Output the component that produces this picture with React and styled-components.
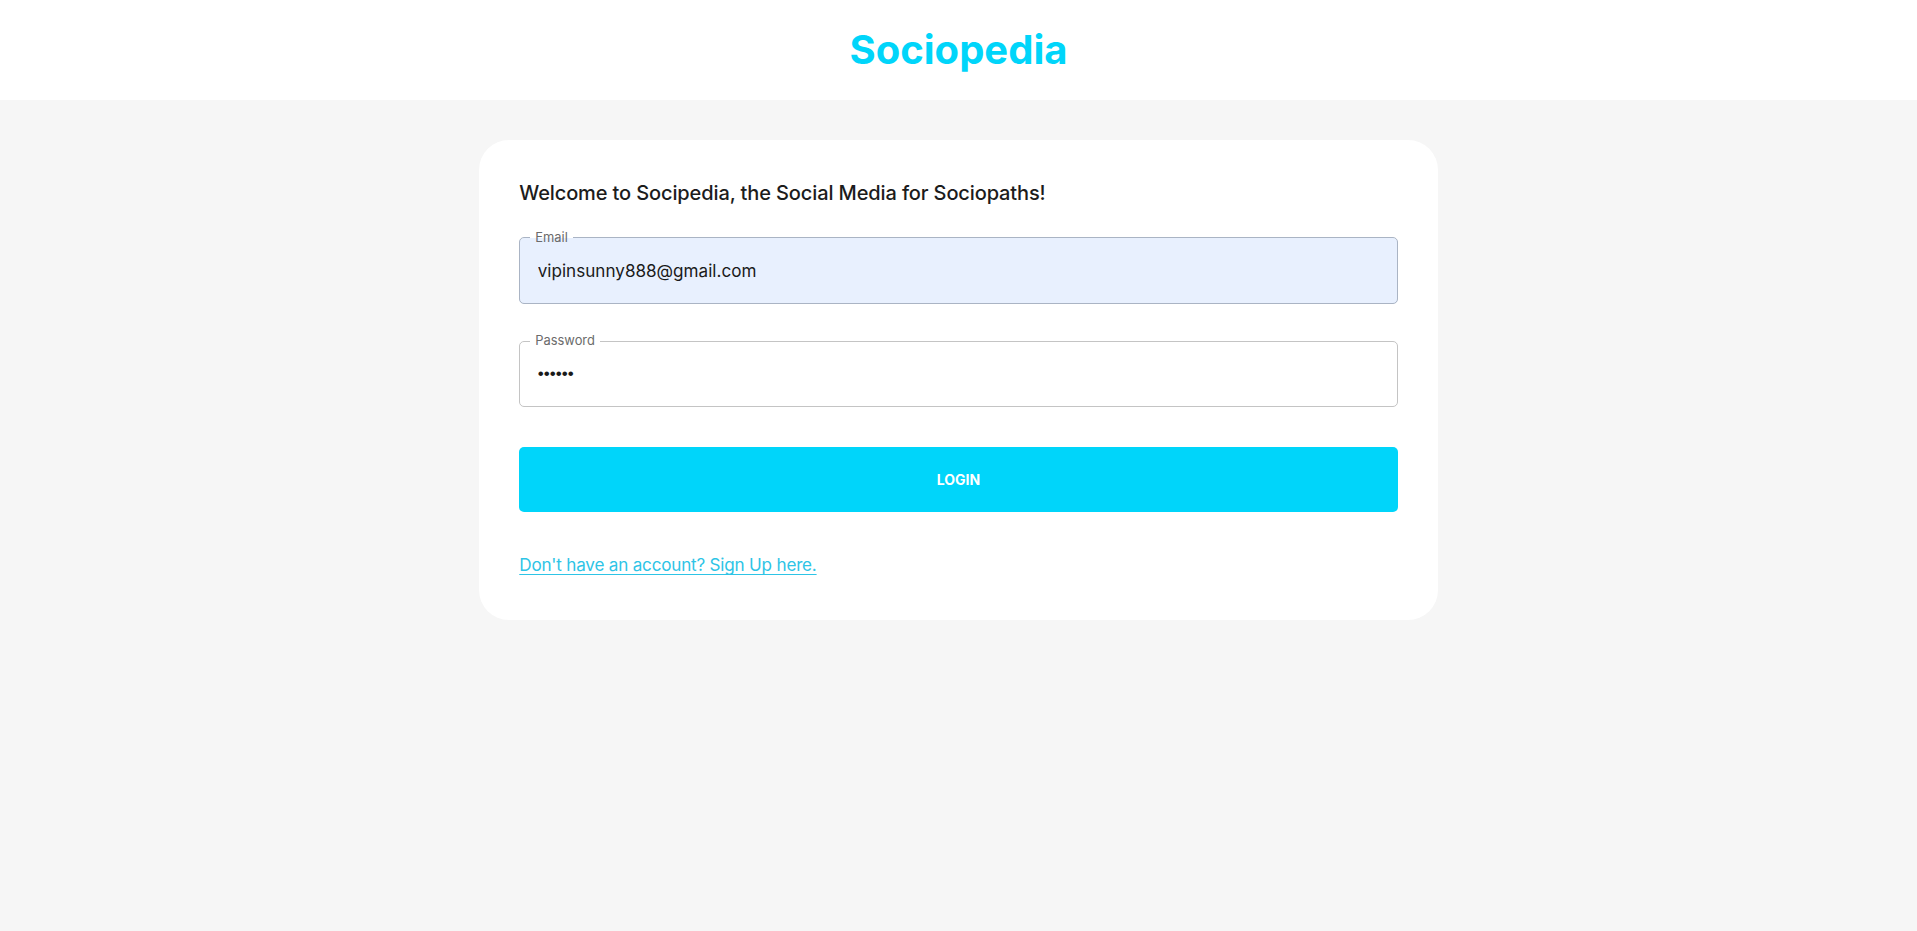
import React from 'react'
import styled, { createGlobalStyle } from 'styled-components'

const GlobalStyle = createGlobalStyle`
  html, body {
    margin: 0;
    padding: 0;
  }
  body {
    background: #f6f6f6;
    font-family: "Inter", "Roboto", "Liberation Sans", sans-serif;
    color: #1f1f1f;
    min-height: 100vh;
  }
  * {
    box-sizing: border-box;
  }
`

const Page = styled.div`
  min-height: 100vh;
  background: #f6f6f6;
`

const Header = styled.header`
  width: 100%;
  background: #ffffff;
  padding: 20px 7.5%;
  text-align: center;
`

const Logo = styled.h1`
  margin: 0;
  font-size: 40px;
  line-height: 60px;
  font-weight: 700;
  color: #00d5fa;
  letter-spacing: 0;
`

const Card = styled.div`
  width: 50%;
  margin: 40px auto;
  padding: 40px 40px 42px;
  border-radius: 30px;
  background: #ffffff;
`

const Welcome = styled.h5`
  margin: 0 0 31px;
  font-size: 20px;
  line-height: 26.7px;
  font-weight: 500;
  color: #1c1c1c;
  letter-spacing: -0.12px;
`

const Form = styled.form`
  display: grid;
  grid-template-columns: repeat(4, minmax(0, 1fr));
  gap: 37.5px;
`

const Field = styled.div`
  position: relative;
  grid-column: span 4;
  height: 66px;
  border-radius: 5px;
  background: ${p => (p.$filled ? '#e8f0fe' : '#ffffff')};
`

const Outline = styled.fieldset`
  position: absolute;
  inset: -6px 0 0 0;
  margin: 0;
  padding: 0 10px;
  border: 1.25px solid ${p => (p.$filled ? '#aab4c4' : '#c4c4c4')};
  border-radius: 5px;
  pointer-events: none;

  legend {
    padding: 0 5px;
    font-size: 12.9px;
    line-height: 12px;
    color: #6b6b6b;
    font-weight: 400;
  }
`

const Input = styled.input`
  display: block;
  width: 100%;
  height: 100%;
  border: none;
  outline: none;
  background: transparent;
  padding: 0 17.5px 0 18.5px;
  font-family: ${p => (p.type === 'password' ? '"Liberation Sans", sans-serif' : 'inherit')};
  font-size: 17.1px;
  color: #1a1a1a;
`

const LoginButton = styled.button`
  grid-column: span 4;
  margin: 2.5px 0 0;
  height: 65px;
  border: none;
  border-radius: 5px;
  background: #00d5fa;
  color: #ffffff;
  font-family: inherit;
  font-size: 14px;
  font-weight: 700;
  text-transform: uppercase;
  letter-spacing: 0;
  cursor: pointer;
`

const SignUp = styled.p`
  margin: 40px 0 0;
  font-size: 17.1px;
  line-height: 25.7px;
  color: #2ec4e6;
  text-decoration: underline;
  text-underline-offset: 3px;
  letter-spacing: -0.2px;
  cursor: pointer;
`

const App = () => {
  return (
    <Page>
      <GlobalStyle />
      <Header>
        <Logo>Sociopedia</Logo>
      </Header>
      <Card>
        <Welcome>Welcome to Socipedia, the Social Media for Sociopaths!</Welcome>
        <Form onSubmit={e => e.preventDefault()}>
          <Field $filled>
            <Outline $filled>
              <legend>Email</legend>
            </Outline>
            <Input type="text" defaultValue="vipinsunny888@gmail.com" readOnly />
          </Field>
          <Field>
            <Outline>
              <legend>Password</legend>
            </Outline>
            <Input type="password" defaultValue="123456" readOnly />
          </Field>
          <LoginButton type="submit">Login</LoginButton>
        </Form>
        <SignUp>Don't have an account? Sign Up here.</SignUp>
      </Card>
    </Page>
  )
}

export default App
